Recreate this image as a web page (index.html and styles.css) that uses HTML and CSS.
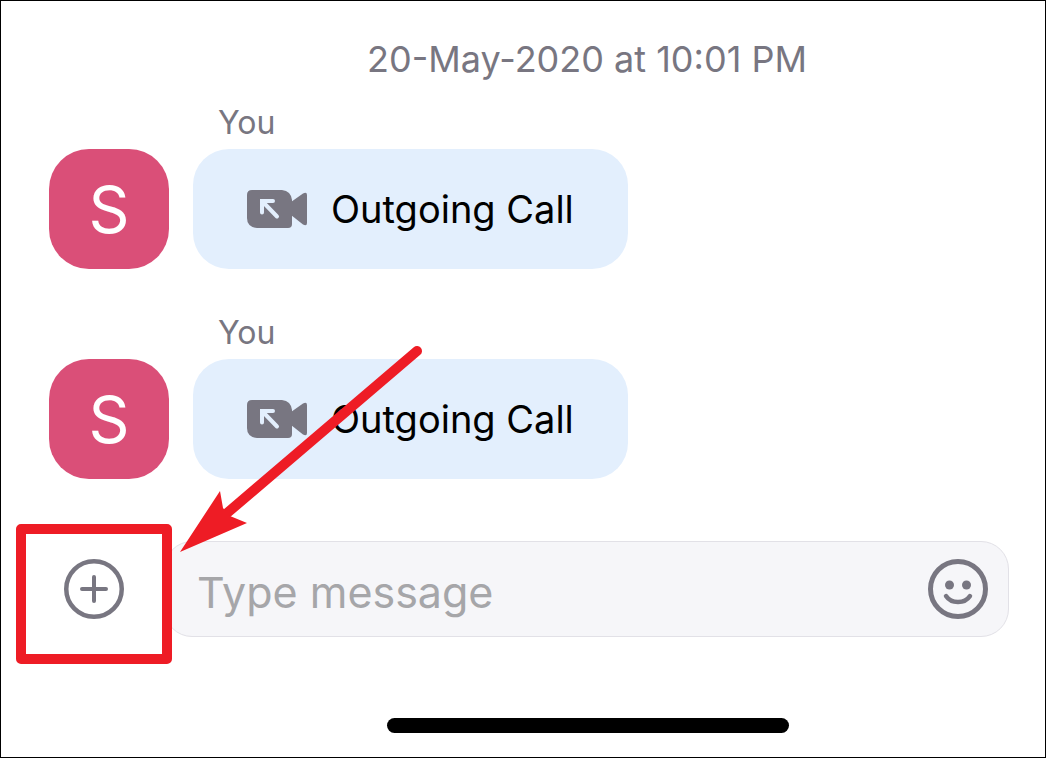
FILE: index.html
```html
<!DOCTYPE html>
<html lang="en">
<head>
    <meta charset="UTF-8">
    <meta name="viewport" content="width=device-width, initial-scale=1">
    <title>Chat</title>
    <link rel="stylesheet" href="styles.css">
</head>
<body>
    <!-- Video camera icon shared by the call messages -->
    <svg class="sprite" width="0" height="0" aria-hidden="true">
        <symbol id="video-call" viewBox="0 0 60 38">
            <path fill="#787681" d="M5 0H35Q44 1 45 10V34Q45 38 41 38H10Q0 37 0 28V5Q0 0 5 0Z"/>
            <path fill="#787681" d="M44 12L56 3.500Q60 1.500 60 5V33Q60 36.500 56 34.500L44 25Z"/>
            <path fill="none" stroke="#e3effd" stroke-width="4" stroke-linecap="round" stroke-linejoin="miter" d="M26 11H15V22.500M15.500 11.500L30 26.500"/>
        </symbol>
    </svg>

    <main class="chat">
        <div class="date">20-May-2020 at 10:01 PM</div>

        <div class="messages">
            <div class="message">
                <div class="sender">You</div>
                <div class="avatar">S</div>
                <div class="bubble">
                    <svg class="call-icon" aria-hidden="true"><use href="#video-call"/></svg>
                    <span>Outgoing Call</span>
                </div>
            </div>
            <div class="message">
                <div class="sender">You</div>
                <div class="avatar">S</div>
                <div class="bubble">
                    <svg class="call-icon" aria-hidden="true"><use href="#video-call"/></svg>
                    <span>Outgoing Call</span>
                </div>
            </div>
        </div>

        <form class="composer">
            <button class="icon-button" type="button" aria-label="Add attachment">
                <svg width="60" height="60" viewBox="0 0 60 60" fill="none" stroke="#787681" stroke-linecap="round">
                    <circle cx="30" cy="30" r="27.750" stroke-width="4.500"/>
                    <path stroke-width="4" d="M30 18V42M18 30H42"/>
                </svg>
            </button>
            <div class="field">
                <input type="text" placeholder="Type message" aria-label="Message">
                <button class="icon-button" type="button" aria-label="Emoji">
                    <svg width="60" height="60" viewBox="0 0 60 60" fill="none" stroke="#787681" stroke-linecap="round">
                        <circle cx="30" cy="30" r="27.500" stroke-width="5"/>
                        <path stroke-width="4.500" d="M18 37Q22 43 30 43T42 37"/>
                        <circle cx="21.500" cy="26" r="4.500" fill="#787681" stroke="none"/>
                        <circle cx="38.500" cy="26" r="4.500" fill="#787681" stroke="none"/>
                    </svg>
                </button>
            </div>
            <div class="highlight"></div>
            <svg class="arrow" width="243" height="207" viewBox="0 0 243 207" aria-hidden="true">
                <path stroke="#ee1c25" stroke-width="10" stroke-linecap="round" d="M237 6L46 169"/>
                <path fill="#ee1c25" d="M0 207L40 146L43 163L50 171L67 178Z"/>
            </svg>
        </form>

        <div class="home-indicator"></div>
    </main>
</body>
</html>
```
FILE: styles.css
```css
* {
    box-sizing: border-box;
}

body {
    margin: 0;
    font-family: Inter, "Liberation Sans", sans-serif;
    background: #fff;
}

.sprite {
    position: absolute;
}

.chat {
    display: flex;
    flex-direction: column;
    min-height: 100vh;
    padding-top: 36px;
    border: 1px solid #000;
}

.date {
    padding-left: 128px;
    font-size: 36px;
    line-height: 44px;
    text-align: center;
    color: #787681;
}

.messages {
    display: flex;
    flex-direction: column;
    gap: 44px;
    padding: 22px 48px 0;
}

.message {
    display: grid;
    grid-template-columns: 120px auto;
    justify-content: start;
    column-gap: 24px;
    row-gap: 6px;
}

.sender {
    grid-column: 2;
    padding-left: 25px;
    font-size: 32px;
    line-height: 40px;
    color: #787681;
}

.avatar {
    display: flex;
    align-items: center;
    justify-content: center;
    height: 120px;
    border-radius: 40px;
    font-size: 64px;
    color: #fff;
    background: #da4f78;
}

.bubble {
    display: flex;
    align-items: center;
    gap: 24px;
    padding: 0 54px;
    border-radius: 36px;
    font-size: 38px;
    color: #000;
    background: #e3effd;
}

.call-icon {
    width: 60px;
    height: 38px;
}

.composer {
    position: relative;
    display: flex;
    align-items: center;
    gap: 40px;
    margin-top: 62px;
    padding: 0 36px 0 63px;
}

.icon-button {
    flex: none;
    display: block;
    padding: 0;
    border: none;
    background: none;
    cursor: pointer;
}

.icon-button svg {
    display: block;
}

.field {
    flex: 1;
    display: flex;
    align-items: center;
    height: 96px;
    padding: 0 20px 0 32px;
    border: 1px solid #e2e1e7;
    border-radius: 28px;
    background: #f6f6f9;
}

.field input {
    flex: 1;
    min-width: 0;
    height: 72px;
    padding: 6px 0 0;
    border: none;
    outline: none;
    font-family: inherit;
    font-size: 43px;
    background: none;
}

.field input::placeholder {
    color: #a6a6a9;
}

/* red box around the add button */
.highlight {
    position: absolute;
    top: -17px;
    left: 15px;
    width: 156px;
    height: 140px;
    border: 10px solid #ee1c25;
    border-radius: 5px;
    pointer-events: none;
}

.arrow {
    position: absolute;
    left: 179px;
    bottom: 85px;
    pointer-events: none;
}

.home-indicator {
    align-self: center;
    width: 532px;
    margin-top: auto;
    padding: 0 0 24px 130px;
}

.home-indicator::before {
    content: "";
    display: block;
    height: 15px;
    border-radius: 8px;
    background: #000;
}
```
